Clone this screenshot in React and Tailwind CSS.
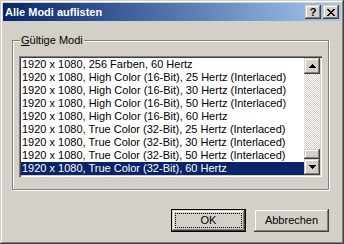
const modes = [
  "1920 x 1080, 256 Farben, 60 Hertz",
  "1920 x 1080, High Color (16-Bit), 25 Hertz (Interlaced)",
  "1920 x 1080, High Color (16-Bit), 30 Hertz (Interlaced)",
  "1920 x 1080, High Color (16-Bit), 50 Hertz (Interlaced)",
  "1920 x 1080, High Color (16-Bit), 60 Hertz",
  "1920 x 1080, True Color (32-Bit), 25 Hertz (Interlaced)",
  "1920 x 1080, True Color (32-Bit), 30 Hertz (Interlaced)",
  "1920 x 1080, True Color (32-Bit), 50 Hertz (Interlaced)",
  "1920 x 1080, True Color (32-Bit), 60 Hertz",
];

// classic raised 3D edge
const raised =
  "bg-[#D4D0C8] shadow-[inset_-1px_-1px_#404040,inset_1px_1px_#D4D0C8,inset_-2px_-2px_#808080,inset_2px_2px_#fff]";

const Arrow = ({ down }) => (
  <svg width="7" height="4" viewBox="0 0 7 4" shapeRendering="crispEdges">
    {down ? (
      <path d="M0 0h7v1H0zM1 1h5v1H1zM2 2h3v1H2zM3 3h1v1H3z" fill="#000" />
    ) : (
      <path d="M3 0h1v1H3zM2 1h3v1H2zM1 2h5v1H1zM0 3h7v1H0z" fill="#000" />
    )}
  </svg>
);

const App = () => {
  return (
    <div
      className="w-[344px] h-[244px] bg-[#D4D0C8] p-[3px] flex flex-col shadow-[inset_-1px_-1px_#404040,inset_1px_1px_#D4D0C8,inset_-2px_-2px_#808080,inset_2px_2px_#fff]"
      style={{ fontFamily: '"Liberation Sans", Arial, sans-serif' }}
    >
      {/* Title bar */}
      <div className="h-[18px] flex items-center justify-between bg-gradient-to-r from-[#0A246A] to-[#A6CAF0] pl-[2px] pr-[2px]">
        <span className="text-white font-bold text-[11px] leading-none">
          Alle Modi auflisten
        </span>
        <div className="flex gap-[2px]">
          <div className={`w-[16px] h-[14px] flex items-center justify-center ${raised}`}>
            <span className="text-black font-bold text-[11px] leading-none">?</span>
          </div>
          <div className={`w-[16px] h-[14px] flex items-center justify-center ${raised}`}>
            <svg width="8" height="7" viewBox="0 0 8 7" shapeRendering="crispEdges">
              <path
                d="M0 0h2v1H0zM6 0h2v1H6zM1 1h2v1H1zM5 1h2v1H5zM2 2h4v1H2zM3 3h2v1H3zM2 4h4v1H2zM1 5h2v1H1zM5 5h2v1H5zM0 6h2v1H0zM6 6h2v1H6z"
                fill="#000"
              />
            </svg>
          </div>
        </div>
      </div>

      {/* Body */}
      <div className="flex-1 flex flex-col pl-[9px] pr-[12px] pt-[19px]">
        {/* Group box */}
        <div className="relative h-[150px] border border-[#808080] shadow-[1px_1px_0_#fff,inset_1px_1px_0_#fff] pt-[15px] px-[6px]">
          <span className="absolute -top-[7px] left-[7px] bg-[#D4D0C8] px-[1px] text-[11px] leading-[13px] text-black">
            <span className="underline">G</span>ültige Modi
          </span>

          {/* List box */}
          <div className="h-[121px] bg-white flex p-[2px] shadow-[inset_1px_1px_#808080,inset_2px_2px_#404040,inset_-1px_-1px_#fff,inset_-2px_-2px_#D4D0C8]">
            <div className="flex-1 flex flex-col">
              {modes.map((m, i) => (
                <div
                  key={i}
                  className={`h-[13px] pl-[1px] text-[11px] leading-[13px] whitespace-nowrap overflow-hidden ${
                    i === modes.length - 1 ? "bg-[#0A246A] text-white" : "text-black"
                  }`}
                >
                  {m}
                </div>
              ))}
            </div>
            {/* Scrollbar */}
            <div className="w-[16px] flex flex-col">
              <div className={`h-[16px] flex items-center justify-center ${raised}`}>
                <Arrow />
              </div>
              <div className="flex-1 bg-[repeating-conic-gradient(#D4D0C8_0_25%,#fff_0_50%)] bg-[length:2px_2px] flex flex-col justify-end">
                <div className={`h-[10px] ${raised}`} />
              </div>
              <div className={`h-[16px] flex items-center justify-center ${raised}`}>
                <Arrow down />
              </div>
            </div>
          </div>
        </div>

        {/* Buttons */}
        <div className="flex justify-end gap-2 mt-[19px]">
          <div className="w-[75px] h-[23px] border border-black">
            <div className={`h-full p-[3px] ${raised}`}>
              <div className="h-full border border-dotted border-black flex items-center justify-center text-[11px] text-black">
                OK
              </div>
            </div>
          </div>
          <div className={`w-[75px] h-[23px] flex items-center justify-center text-[11px] text-black ${raised}`}>
            Abbrechen
          </div>
        </div>
      </div>
    </div>
  );
};

export default App;
